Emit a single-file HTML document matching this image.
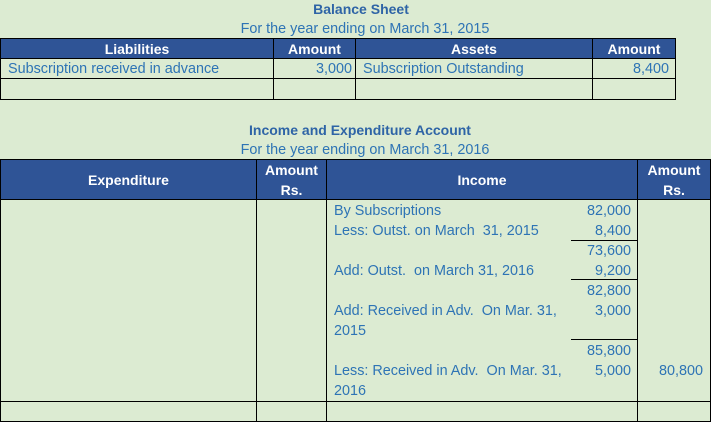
<!DOCTYPE html>
<html><head><meta charset="utf-8"><style>
body{margin:0;width:711px;height:421px;background:#dcebd2;position:relative;overflow:hidden;font-family:"Liberation Sans",sans-serif;font-size:14.4px;color:#2e74b5}
div{position:absolute;box-sizing:border-box}
.t{white-space:nowrap}
.h{background:#2f5496;color:#fff;font-weight:bold;text-align:center;font-size:14px}
.b{border:1px solid #000}
.r{text-align:right}
</style></head><body>
<div class="t" style="left:0;width:722px;top:1px;text-align:center;font-weight:bold;color:#2e64a6;font-size:14px">Balance Sheet</div>
<div class="t" style="left:0;width:730px;top:21px;text-align:center">For the year ending on March 31, 2015</div>

<div class="b h" style="left:0;top:38px;width:274px;height:21px;line-height:20px">Liabilities</div>
<div class="b h" style="left:273px;top:38px;width:83px;height:21px;line-height:20px">Amount</div>
<div class="b h" style="left:355px;top:38px;width:238px;height:21px;line-height:20px">Assets</div>
<div class="b h" style="left:592px;top:38px;width:84px;height:21px;line-height:20px">Amount</div>

<div class="b t" style="left:0;top:58px;width:274px;height:21px;line-height:21px;padding-left:7px">Subscription received in advance</div>
<div class="b t r" style="left:273px;top:58px;width:83px;height:21px;line-height:21px;padding-right:3px">3,000</div>
<div class="b t" style="left:355px;top:58px;width:238px;height:21px;line-height:21px;padding-left:7px">Subscription Outstanding</div>
<div class="b t r" style="left:592px;top:58px;width:84px;height:21px;line-height:21px;padding-right:6px">8,400</div>

<div class="b" style="left:0;top:78px;width:274px;height:22px"></div>
<div class="b" style="left:273px;top:78px;width:83px;height:22px"></div>
<div class="b" style="left:355px;top:78px;width:238px;height:22px"></div>
<div class="b" style="left:592px;top:78px;width:84px;height:22px"></div>

<div class="t" style="left:0;width:720px;top:122px;text-align:center;font-weight:bold;color:#2e64a6;font-size:14px">Income and Expenditure Account</div>
<div class="t" style="left:0;width:730px;top:142px;text-align:center">For the year ending on March 31, 2016</div>

<div class="b h" style="left:0;top:159px;width:257px;height:41px;line-height:40px">Expenditure</div>
<div class="b h" style="left:256px;top:159px;width:71px;height:41px;line-height:20px">Amount<br>Rs.</div>
<div class="b h" style="left:326px;top:159px;width:312px;height:41px;line-height:40px">Income</div>
<div class="b h" style="left:637px;top:159px;width:74px;height:41px;line-height:20px">Amount<br>Rs.</div>

<div class="b" style="left:0;top:199px;width:257px;height:203px"></div>
<div class="b" style="left:256px;top:199px;width:71px;height:203px"></div>
<div class="b" style="left:326px;top:199px;width:312px;height:203px"></div>
<div class="b" style="left:637px;top:199px;width:74px;height:203px"></div>
<div class="b" style="left:0;top:401px;width:257px;height:21px"></div>
<div class="b" style="left:256px;top:401px;width:71px;height:21px"></div>
<div class="b" style="left:326px;top:401px;width:312px;height:21px"></div>
<div class="b" style="left:637px;top:401px;width:74px;height:21px"></div>

<div style="left:571px;top:240px;width:67px;height:1px;background:#000"></div>
<div style="left:571px;top:279px;width:67px;height:1px;background:#000"></div>
<div style="left:571px;top:339px;width:67px;height:1px;background:#000"></div>

<div class="t" style="left:334px;top:201px;line-height:20px">By Subscriptions<br>Less: Outst. on March&nbsp; 31, 2015<br><br>Add: Outst.&nbsp; on March 31, 2016<br><br>Add: Received in Adv.&nbsp; On Mar. 31,<br>2015<br><br>Less: Received in Adv.&nbsp; On Mar. 31,<br>2016</div>
<div class="t r" style="left:560px;width:71px;top:201px;line-height:20px">82,000<br>8,400<br>73,600<br>9,200<br>82,800<br>3,000<br><br>85,800<br>5,000</div>
<div class="t r" style="left:640px;width:63px;top:361px;line-height:20px">80,800</div>
</body></html>
